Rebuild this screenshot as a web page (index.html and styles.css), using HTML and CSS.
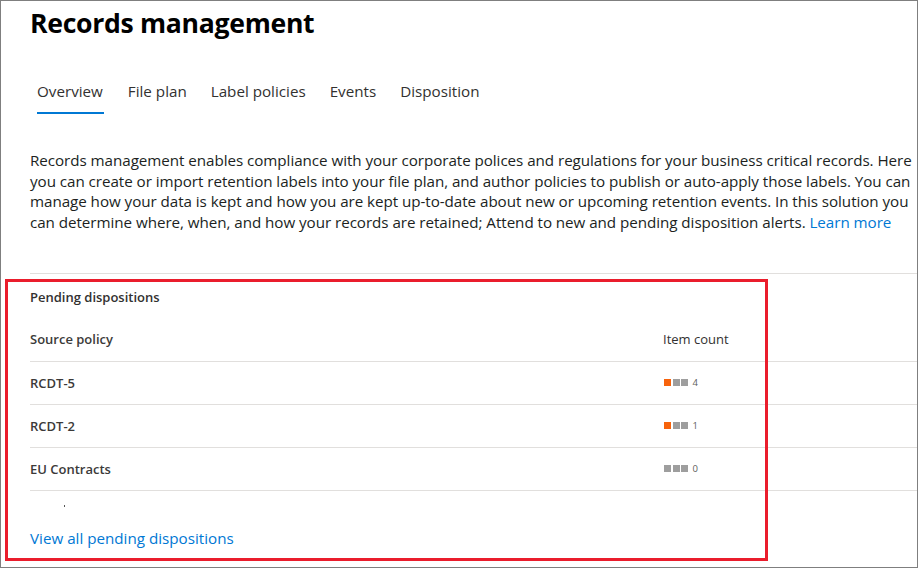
FILE: index.html
```html
<!DOCTYPE html>
<html lang="en">
<head>
<meta charset="utf-8">
<title>Records management</title>
<link rel="stylesheet" href="styles.css">
</head>
<body>
<div class="frame">
  <h1 class="title">Records management</h1>
  <nav class="tabs">
    <a class="tab active">Overview</a>
    <a class="tab">File plan</a>
    <a class="tab">Label policies</a>
    <a class="tab">Events</a>
    <a class="tab">Disposition</a>
  </nav>
  <p class="intro">Records management enables compliance with your corporate polices and regulations for your business critical records. Here<br>you can create or import retention labels into your file plan, and author policies to publish or auto-apply those labels. You can<br>manage how your data is kept and how you are kept up-to-date about new or upcoming retention events. In this solution you<br>can determine where, when, and how your records are retained; Attend to new and pending disposition alerts. <a class="link">Learn more</a></p>
  <section class="card">
    <h2 class="card-title">Pending dispositions</h2>
    <div class="row head">
      <span class="c1">Source policy</span>
      <span class="c2">Item count</span>
    </div>
    <div class="row">
      <span class="c1">RCDT-5</span>
      <span class="c2 count"><i class="sq on"></i><i class="sq"></i><i class="sq"></i><span class="num">4</span></span>
    </div>
    <div class="row">
      <span class="c1">RCDT-2</span>
      <span class="c2 count"><i class="sq on"></i><i class="sq"></i><i class="sq"></i><span class="num">1</span></span>
    </div>
    <div class="row">
      <span class="c1">EU Contracts</span>
      <span class="c2 count"><i class="sq"></i><i class="sq"></i><i class="sq"></i><span class="num">0</span></span>
    </div>
    <div class="row partial"><span class="dot"></span></div>
    <a class="link view-all">View all pending dispositions</a>
  </section>
  <div class="highlight"></div>
</div>
</body>
</html>
```

FILE: styles.css
```css
html, body {
  margin: 0;
  padding: 0;
  background: #ffffff;
}
body {
  font-family: "Open Sans", "Noto Sans", sans-serif;
  color: #201f1e;
}
.frame {
  position: relative;
  box-sizing: border-box;
  width: 918px;
  height: 568px;
  border: 1px solid #7f7f7f;
  overflow: hidden;
  padding-left: 29px;
}
.title {
  margin: 0;
  padding-top: 4px;
  font-size: 26.6px;
  font-weight: 700;
  line-height: 36px;
  color: #000;
  letter-spacing: -0.3px;
}
.tabs {
  display: flex;
  gap: 24px;
  margin-top: 40px;
  padding-left: 7px;
}
.tab {
  font-size: 15.2px;
  line-height: 20px;
  color: #323130;
  padding-bottom: 11px;
  border-bottom: 2px solid transparent;
}
.tab.active {
  border-bottom-color: #0078d4;
}
.tab:first-child {
  padding-right: 1px;
}
.intro {
  margin: 36px 0 0 0;
  width: 900px;
  white-space: nowrap;
  font-size: 15.2px;
  line-height: 20.7px;
  color: #201f1e;
  letter-spacing: -0.05px;
}
.link {
  color: #0078d4;
}
.card {
  margin-top: 40px;
  border-top: 1px solid #e1dfdd;
}
.card-title {
  margin: 0;
  padding-top: 14px;
  font-size: 13px;
  font-weight: 600;
  line-height: 18px;
  color: #323130;
}
.row {
  display: flex;
  align-items: center;
  height: 42px;
  border-bottom: 1px solid #e1dfdd;
  font-size: 13px;
  color: #3b3a39;
}
.row.head {
  height: 48px;
  margin-top: 7px;
}
.row.head span {
  padding-top: 4px;
}
.row.head .c2 {
  font-weight: 400;
  color: #323130;
}
.c1 {
  width: 633px;
  font-weight: 600;
}
.c2 {
  flex: 1;
}
.count {
  display: flex;
  align-items: center;
  gap: 1.5px;
  padding-left: 1px;
}
.sq {
  display: block;
  width: 7px;
  height: 7px;
  background: #9e9e9e;
}
.sq.on {
  background: #f7630c;
}
.num {
  margin-left: 3px;
  font-size: 9.5px;
  color: #605e5c;
}
.row.partial {
  border-bottom: none;
  height: 37px;
  position: relative;
}
.dot {
  position: absolute;
  left: 34px;
  top: 14px;
  width: 1px;
  height: 2px;
  background: #555;
}
.view-all {
  display: block;
  font-size: 15.2px;
  line-height: 20px;
}
.highlight {
  position: absolute;
  left: 4px;
  top: 278px;
  width: 757px;
  height: 276px;
  border: 3px solid #ea1d2c;
}
```
